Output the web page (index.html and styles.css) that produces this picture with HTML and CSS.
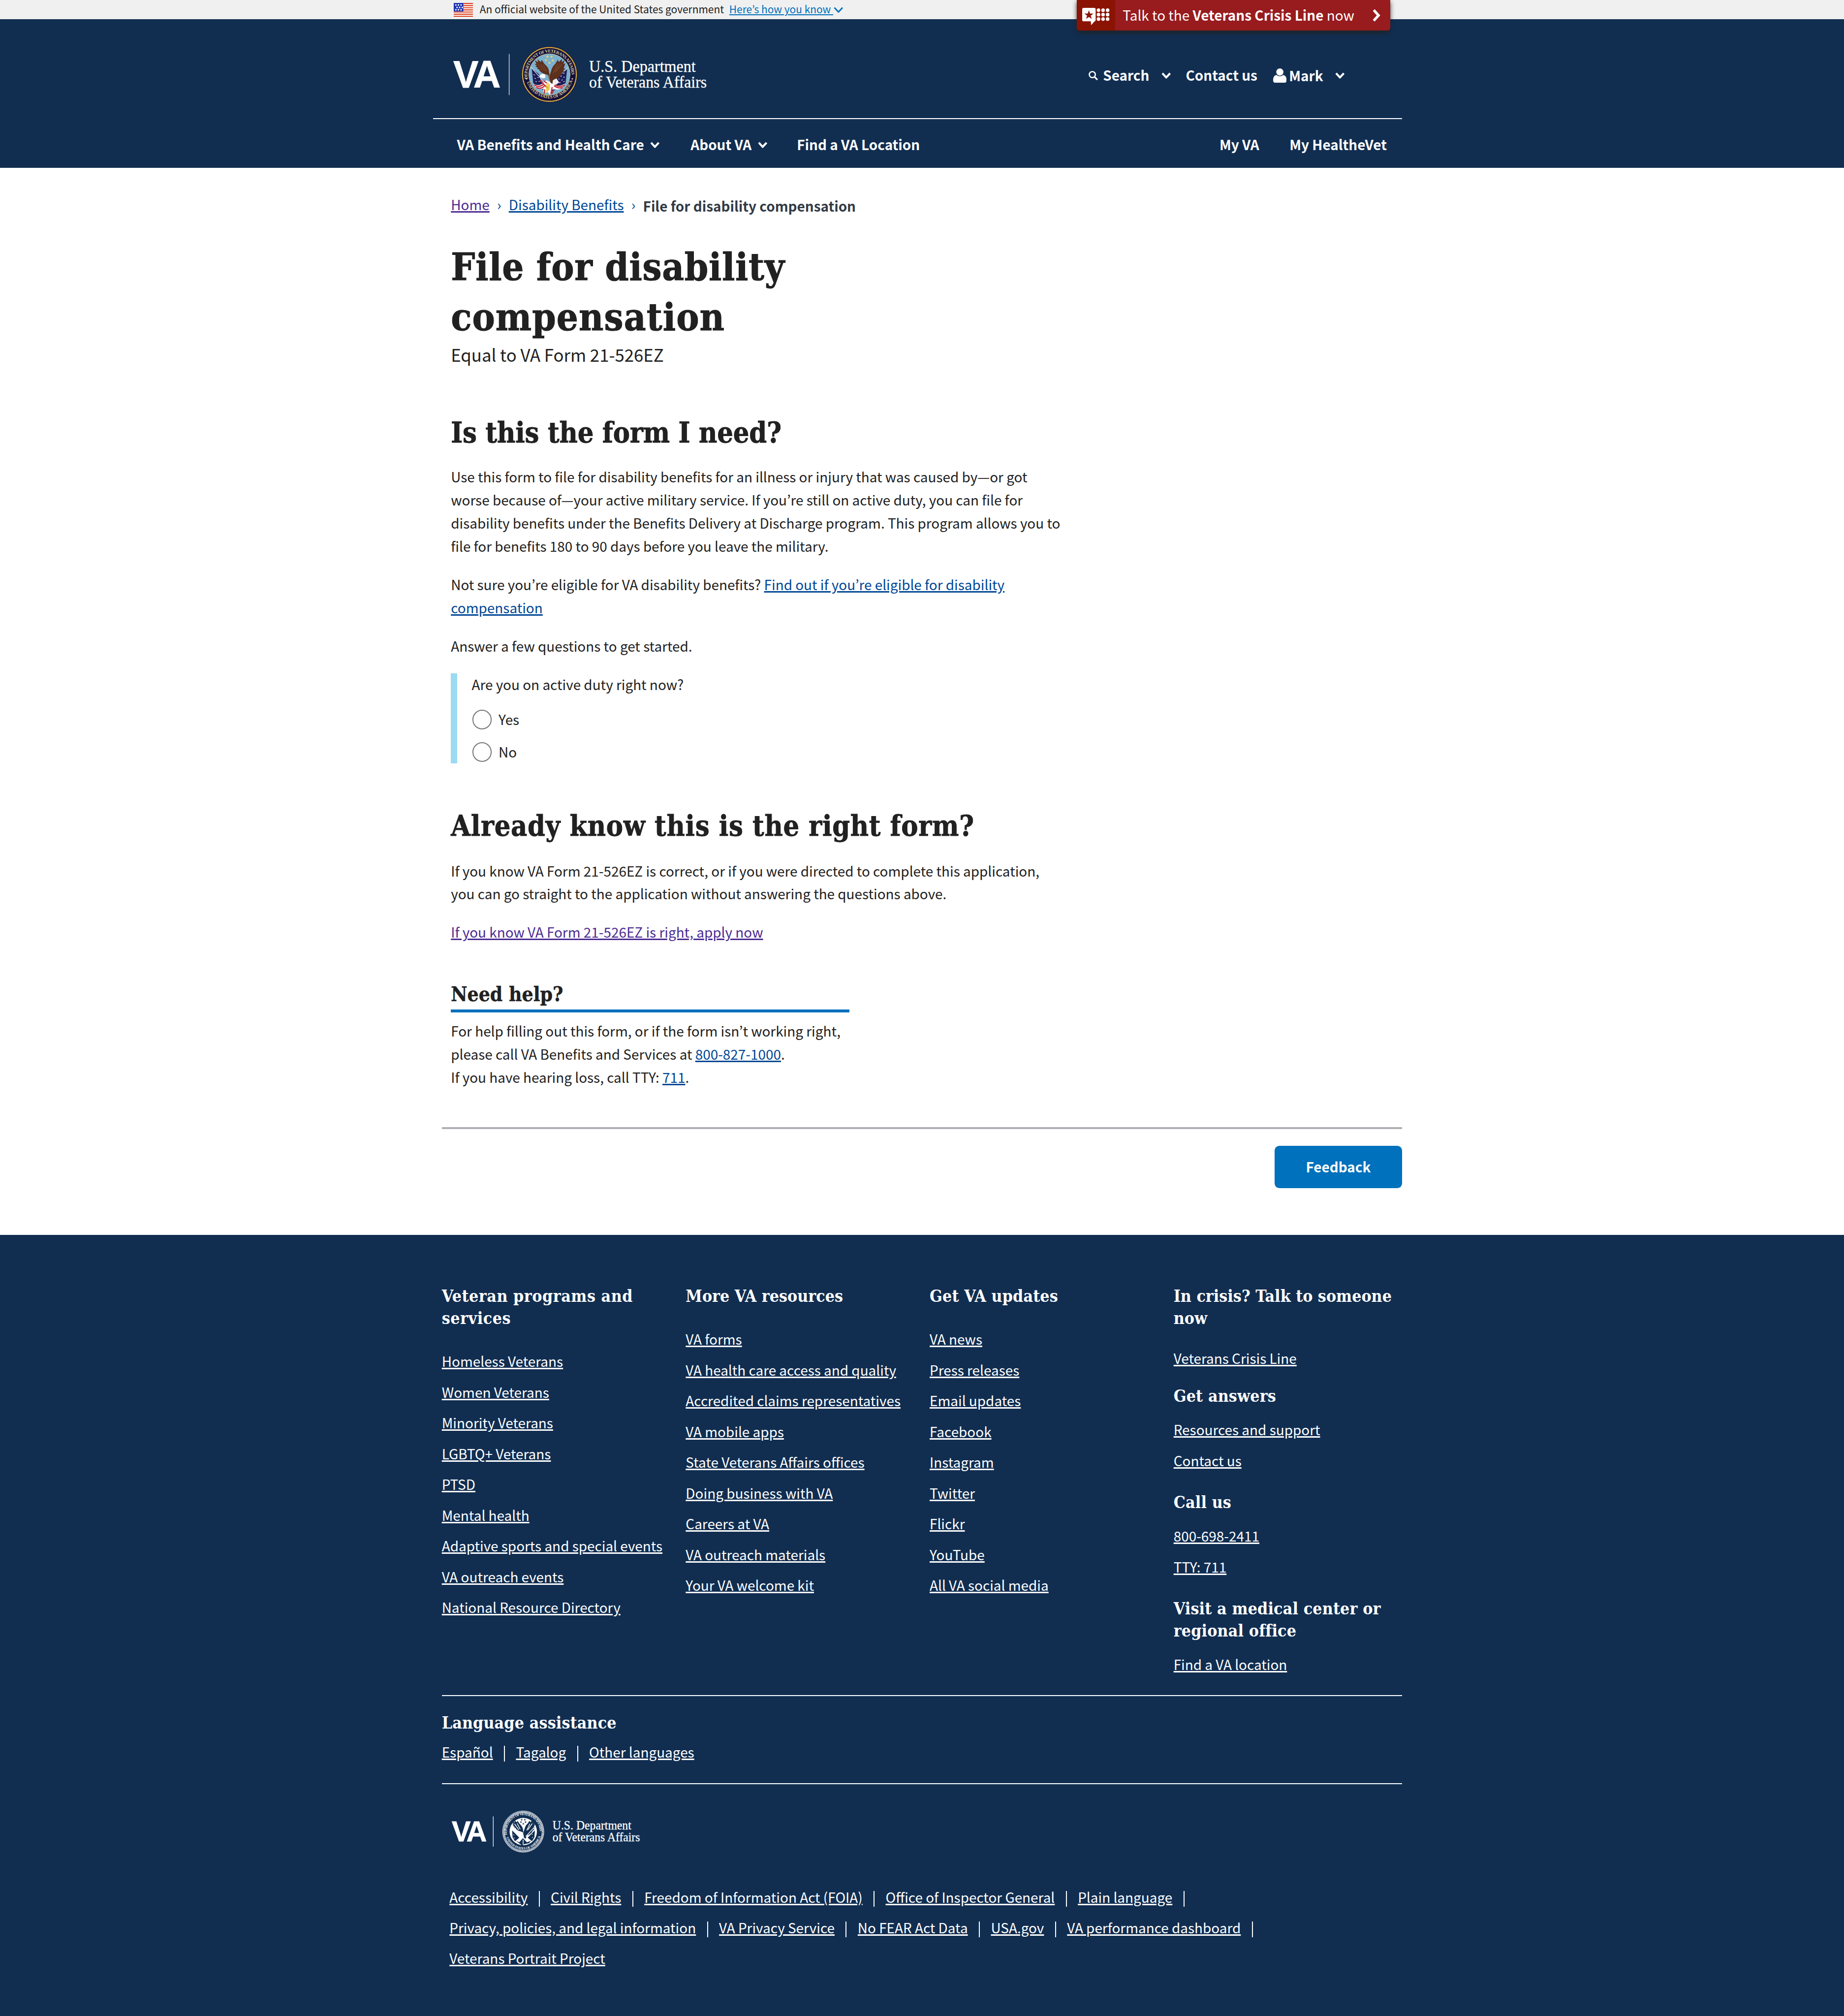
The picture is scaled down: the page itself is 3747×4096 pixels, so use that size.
FILE: index.html
```html
<!DOCTYPE html>
<html lang="en">
<head>
<meta charset="utf-8">
<title>File for disability compensation | Veterans Affairs</title>
<link rel="stylesheet" href="styles.css">
</head>
<body>

<svg class="defs" width="0" height="0" aria-hidden="true">
  <defs>
    <symbol id="chevron" viewBox="0 0 20 13"><path d="M2 2l8 8.600L18 2" fill="none" stroke="currentColor" stroke-width="4.200"/></symbol>
    <path id="star" d="M0-10l2.400 6.800h7.100l-5.700 4.300 2.100 7L0 4l-5.900 4.100 2.100-7-5.700-4.300h7.100z"/>
    <path id="arc-top" d="M537.700 253A138 138 0 1 1 808.300 253"/>
    <path id="arc-bottom" d="M526 252A149.500 149.500 0 0 0 820 252"/>
    <g id="wings">
      <path d="M578 158l14 4-10-26 20 14-4-20 22 18 4-14 18 26c16 14 26 28 28 44l4 30-22-10c-22-4-38-16-44-30l-14-6 8-4-18-8 10-4z"/>
      <path d="M772 156l-12 4 8-24-18 12 2-20-22 20-4-16-16 26c-16 14-22 28-26 44l-12 36 8 40 14 6 8-26c26-8 44-24 50-42l14-10-8-4 14-12-10-4z"/>
    </g>
  </defs>
</svg>

<div class="banner">
  <svg class="flag" viewBox="0 0 40 29">
    <rect width="40" height="29" fill="#fff"/>
    <path d="M0 1.100h40M0 5.560h40M0 10.020h40M0 14.480h40M0 18.940h40M0 23.400h40M0 27.860h40" stroke="#db3e1f" stroke-width="2.230"/>
    <rect width="20" height="17.800" fill="#1e33b1"/>
    <path d="M3 4.300h14.500M5.500 9.300h14M3 14.300h14.500" stroke="#fff" stroke-width="2.800" stroke-dasharray="2.800 2.600"/>
  </svg>
  <span class="banner-text">An official website of the United States government</span>
  <a class="banner-link">Here’s how you know&nbsp;</a>
  <svg class="banner-chevron" viewBox="0 0 20 13"><path d="M1.500 1.500L10 10.600l8.500-9.100" fill="none" stroke="currentColor" stroke-width="3"/></svg>
</div>

<header class="header">
  <a class="crisis">
    <span class="crisis-icon">
      <svg viewBox="0 0 58 36">
        <path d="M3 0h22a3 3 0 0 1 3 3v22a3 3 0 0 1-2 3l-7.500 8-.5-8H3a3 3 0 0 1-3-3V3a3 3 0 0 1 3-3z" fill="#fff"/>
        <use href="#star" x="14" y="15" fill="#8b1303"/>
        <g fill="#fff"><circle cx="34" cy="4.800" r="3.700"/><circle cx="43.500" cy="4.800" r="3.700"/><circle cx="53" cy="4.800" r="3.700"/><circle cx="34" cy="14" r="3.700"/><circle cx="43.500" cy="14" r="3.700"/><circle cx="53" cy="14" r="3.700"/><circle cx="34" cy="23.300" r="3.700"/><circle cx="43.500" cy="23.300" r="3.700"/><circle cx="53" cy="23.300" r="3.700"/></g>
      </svg>
    </span>
    <span class="crisis-text">Talk to the <b>Veterans Crisis Line</b> now</span>
    <svg class="crisis-arrow" viewBox="0 0 18 27"><path d="M3.500 2.500l10 11-10 11" fill="none" stroke="#fff" stroke-width="5.400"/></svg>
  </a>
  <div class="header-top">
    <svg class="logo" viewBox="944 40 540 206">
      <text x="944 985.800" y="182.500" class="logo-va" font-size="79">VA</text>
      <path d="M1060.500 112.500v85.500" stroke="#b4bcc8" stroke-width="1.800"/>
      <g transform="translate(920 80) scale(.33333)">
        <circle cx="673" cy="225" r="175" fill="#120f3d"/>
        <circle cx="673" cy="225" r="168" fill="none" stroke="#8f6a24" stroke-width="8"/>
        <circle cx="673" cy="225" r="168" fill="none" stroke="#f0c757" stroke-width="6" stroke-dasharray="6 3"/>
        <circle cx="673" cy="225" r="129" fill="#7db0cf" stroke="#d9c27a" stroke-width="3"/>
        <text class="seal-text" fill="#dccf97" font-size="27"><textPath href="#arc-top" textLength="462" lengthAdjust="spacing">DEPARTMENT OF VETERANS AFFAIRS</textPath></text>
        <text class="seal-text" fill="#dccf97" font-size="27"><textPath href="#arc-bottom" startOffset="22" textLength="380" lengthAdjust="spacing">UNITED STATES OF AMERICA</textPath></text>
        <circle cx="530" cy="253" r="4.500" fill="#dccf97"/><circle cx="816" cy="253" r="4.500" fill="#dccf97"/>
        <g fill="#ecd75c"><use href="#star" x="660" y="114"/><use href="#star" x="686" y="114"/><use href="#star" x="651" y="136"/><use href="#star" x="694" y="138"/><use href="#star" x="673" y="153"/></g>
        <path d="M562 186l44 36 14 44 34 60-50-14-32-32z" fill="#1d1c57"/>
        <path d="M784 186l-66 56-10 34-20 52 50-16 36-34z" fill="#1d1c57"/>
        <path d="M574 226l8 4M580 248l8 4M598 242l8 4M586 268l8 4M606 266l6 4M768 216l-8 4M750 234l-8 4M768 240l-8 4M736 252l-8 4M756 258l-8 4M768 268l-8 4M742 274l-8 4" stroke="#e6e6f2" stroke-width="4"/>
        <path d="M574 282c20 14 36 10 50 4l30-24 30 14 26 14c24 8 40 6 58-8-10 26-24 36-46 38l-30-2-16 34-12-16-14 4-8-8-8 6 2-24c-30 6-52-4-62-32z" fill="#fff"/>
        <path d="M578 290c20 14 40 12 58-2M590 306c16 8 36 6 52-8M614 262l46 48M622 256l36 24M768 292c-20 12-40 10-62-2M756 308c-20 4-38 0-54-12M690 304l-8 42M644 318l-4 26M700 320l-12 26" fill="none" stroke="#c3202f" stroke-width="7"/>
        <path d="M558 180l80 90M788 184l-74 68" stroke="#eef1f6" stroke-width="4"/>
        <use href="#wings" fill="#5b301d"/>
        <path d="M600 160l30 40M616 158l28 44M632 160l24 46M752 158l-36 50M738 156l-32 56M722 160l-26 60M666 232l10 34" fill="none" stroke="#80492b" stroke-width="4"/>
        <path d="M646 226c-14-8-28-2-32 8l-2 12 8-4c8 8 18 8 28 2z" fill="#fff"/>
        <path d="M694 262l22-12 18 24-20 16-22-6z" fill="#f1eef0"/>
        <path d="M654 286l4 54M664 276v52M672 286l-2 36" stroke="#e9bb2f" stroke-width="6"/>
      </g>
      <text x="1227" y="150" class="logo-name" font-size="35.500" textLength="222" lengthAdjust="spacingAndGlyphs">U.S. Department</text>
      <text x="1227" y="182" class="logo-name" font-size="35.500" textLength="245" lengthAdjust="spacingAndGlyphs">of Veterans Affairs</text>
    </svg>
    <div class="utility">
      <svg class="icon-search" viewBox="0 0 19 19"><circle cx="7.800" cy="7.800" r="6.300" fill="none" stroke="#fff" stroke-width="2.600"/><path d="M12.400 12.400l5 5.200" stroke="#fff" stroke-width="3.200" stroke-linecap="round"/></svg>
      <span class="u-search">Search</span>
      <svg class="chev u-chev-search"><use href="#chevron"/></svg>
      <span class="u-contact">Contact us</span>
      <svg class="icon-user" viewBox="0 0 28 30"><circle cx="14" cy="7.500" r="7.500" fill="#fff"/><path d="M7 13.500c4 3.600 10 3.600 14 0 5 1 7 5 7 11 0 3.500-1.500 5.500-5 5.500H5c-3.500 0-5-2-5-5.500 0-6 2-10 7-11z" fill="#fff"/></svg>
      <span class="u-user">Mark</span>
      <svg class="chev u-chev-user"><use href="#chevron"/></svg>
    </div>
  </div>
  <nav class="nav">
    <span>VA Benefits and Health Care</span><svg class="chev nav-chev"><use href="#chevron"/></svg>
    <span class="nav-about">About VA</span><svg class="chev nav-chev"><use href="#chevron"/></svg>
    <span class="nav-find">Find a VA Location</span>
    <span class="nav-my">My VA</span>
    <span class="nav-mhv">My HealtheVet</span>
  </nav>
</header>

<main class="main">
  <nav class="crumbs">
    <a class="visited">Home</a><span class="sep">›</span><a>Disability Benefits</a><span class="sep">›</span><b>File for disability compensation</b>
  </nav>
  <h1>File for disability<br><span class="h1-second">compensation</span></h1>
  <p class="subtitle">Equal to VA Form 21-526EZ</p>

  <h2 class="h2-need">Is this the form I need?</h2>
  <p>Use this form to file for disability benefits for an illness or injury that was caused by—or got<br>worse because of—your active military service. If you’re still on active duty, you can file for<br>disability benefits under the Benefits Delivery at Discharge program. This program allows you to<br>file for benefits 180 to 90 days before you leave the military.</p>
  <p>Not sure you’re eligible for VA disability benefits? <a>Find out if you’re eligible for disability<br>compensation</a></p>
  <p>Answer a few questions to get started.</p>
  <div class="question">
    <div class="legend">Are you on active duty right now?</div>
    <label class="option"><i class="radio"></i>Yes</label>
    <label class="option"><i class="radio"></i>No</label>
  </div>

  <h2 class="h2-know">Already know this is the right form?</h2>
  <p>If you know VA Form 21-526EZ is correct, or if you were directed to complete this application,<br>you can go straight to the application without answering the questions above.</p>
  <p><a class="visited">If you know VA Form 21-526EZ is right, apply now</a></p>

  <h3>Need help?</h3>
  <p class="help">For help filling out this form, or if the form isn’t working right,<br>please call VA Benefits and Services at <a>800-827-1000</a>.<br>If you have hearing loss, call TTY: <a>711</a>.</p>
</main>
<div class="feedback">
  <button class="feedback-btn">Feedback</button>
</div>

<footer class="footer">
  <div class="cols">
    <section>
      <h4 class="wide">Veteran programs and<br>services</h4>
      <ul class="first">
        <li><a>Homeless Veterans</a></li><li><a>Women Veterans</a></li><li><a>Minority Veterans</a></li><li><a>LGBTQ+ Veterans</a></li><li><a>PTSD</a></li><li><a>Mental health</a></li><li><a>Adaptive sports and special events</a></li><li><a>VA outreach events</a></li><li><a>National Resource Directory</a></li>
      </ul>
    </section>
    <section>
      <h4 class="tight">More VA resources</h4>
      <ul class="first">
        <li><a>VA forms</a></li><li><a>VA health care access and quality</a></li><li><a>Accredited claims representatives</a></li><li><a>VA mobile apps</a></li><li><a>State Veterans Affairs offices</a></li><li><a>Doing business with VA</a></li><li><a>Careers at VA</a></li><li><a>VA outreach materials</a></li><li><a>Your VA welcome kit</a></li>
      </ul>
    </section>
    <section>
      <h4>Get VA updates</h4>
      <ul class="first">
        <li><a>VA news</a></li><li><a>Press releases</a></li><li><a>Email updates</a></li><li><a>Facebook</a></li><li><a>Instagram</a></li><li><a>Twitter</a></li><li><a>Flickr</a></li><li><a>YouTube</a></li><li><a>All VA social media</a></li>
      </ul>
    </section>
    <section class="contact">
      <h4 class="tight">In crisis? Talk to someone<br>now</h4>
      <ul class="crisis-list"><li><a>Veterans Crisis Line</a></li></ul>
      <h4 class="answers">Get answers</h4>
      <ul><li><a>Resources and support</a></li><li><a>Contact us</a></li></ul>
      <h4 class="more">Call us</h4>
      <ul><li><a>800-698-2411</a></li><li><a>TTY: 711</a></li></ul>
      <h4 class="more">Visit a medical center or<br>regional office</h4>
      <ul><li><a>Find a VA location</a></li></ul>
    </section>
  </div>

  <div class="language">
    <h4>Language assistance</h4>
    <div class="links lang-links"><a>Español</a><i></i><a>Tagalog</a><i></i><a>Other languages</a></div>
  </div>

  <svg class="footer-logo" viewBox="936 3715 420 202">
    <text x="941 971.500" y="3833.700" class="logo-va" font-size="59">VA</text>
    <path d="M1027.500 3782v63" stroke="#fff" stroke-width="1.300"/>
    <g transform="translate(1090 3813.500) scale(.25) translate(-673 -225)">
      <circle cx="673" cy="225" r="172" fill="none" stroke="#fff" stroke-width="4"/>
      <circle cx="673" cy="225" r="163" fill="none" stroke="#fff" stroke-width="11" stroke-dasharray="7 4"/>
      <circle cx="673" cy="225" r="156" fill="none" stroke="#fff" stroke-width="3"/>
      <circle cx="673" cy="225" r="114" fill="#fff"/>
      <text class="seal-text" fill="#fff" font-size="28"><textPath href="#arc-top" textLength="458" lengthAdjust="spacing">DEPARTMENT OF VETERANS AFFAIRS</textPath></text>
      <text class="seal-text" fill="#fff" font-size="28"><textPath href="#arc-bottom" startOffset="22" textLength="380" lengthAdjust="spacing">UNITED STATES OF AMERICA</textPath></text>
      <g fill="#112e51">
        <use href="#star" x="660" y="126"/><use href="#star" x="686" y="126"/><use href="#star" x="654" y="146"/><use href="#star" x="692" y="146"/><use href="#star" x="673" y="160"/>
        <use href="#wings"/>
        <path d="M580 214l60 62-36 30-20-34zM770 214l-60 62 36 30 20-34z"/>
        <path d="M610 300l30 14 30-34 36 34 32-14-18 22-40 8-12 14-16-12z"/>
      </g>
      <path d="M580 186l70 76M766 188l-72 78M600 160l36 50M622 156l26 50M748 158l-36 52M728 160l-26 56M620 300l30-24M636 308l22-22M724 302l-28-24M706 312l-20-20M672 292v44" stroke="#fff" stroke-width="6"/>
      <path d="M590 250l8 4M594 276l8 4M752 246l-8 4M754 272l-8 4" stroke="#fff" stroke-width="5"/>
    </g>
    <text x="1151" y="3809.500" class="logo-name" font-size="26" textLength="164" lengthAdjust="spacingAndGlyphs">U.S. Department</text>
    <text x="1151" y="3833.700" class="logo-name" font-size="26" textLength="182" lengthAdjust="spacingAndGlyphs">of Veterans Affairs</text>
  </svg>

  <div class="legal">
    <div class="links"><a>Accessibility</a><i></i><a>Civil Rights</a><i></i><a>Freedom of Information Act (FOIA)</a><i></i><a>Office of Inspector General</a><i></i><a>Plain language</a><i></i></div>
    <div class="links"><a>Privacy, policies, and legal information</a><i></i><a>VA Privacy Service</a><i></i><a>No FEAR Act Data</a><i></i><a>USA.gov</a><i></i><a>VA performance dashboard</a><i></i></div>
    <div class="links"><a>Veterans Portrait Project</a></div>
  </div>
</footer>
</body>
</html>
```
FILE: styles.css
```css
/* 1rem is ten design pixels */
html { font-size: 9.7575px; }
* { box-sizing: border-box; margin: 0; padding: 0; }
body {
  width: 384rem;
  min-height: 100vh;
  display: flex;
  flex-direction: column;
  overflow-x: hidden;
  background: #fff;
  color: #212121;
  font-family: "Noto Sans CJK KR", "Noto Sans", sans-serif;
  font-size: 2.861rem;
  line-height: 4.8rem;
  white-space: nowrap;
}
svg { display: block; flex: none; }
.defs { position: absolute; }
ul { list-style: none; }
a {
  color: #004795;
  text-decoration: underline;
  text-decoration-thickness: 3px;
  text-underline-offset: 0.2rem;
}
a.visited { color: #4c2c92; }
h1, h2, h3, h4 {
  font-family: "DejaVu Serif Condensed", "DejaVu Serif", serif;
  font-stretch: condensed;
  font-weight: 700;
}

/* government banner */
.banner {
  height: 4rem;
  padding-left: 94.5rem;
  display: flex;
  align-items: flex-start;
  background: #f0f0f0;
  font-size: 2.146rem;
  line-height: 3.8rem;
}
.flag { width: 4rem; height: 2.9rem; margin-top: 0.6rem; }
.banner-text { margin-left: 1.4rem; }
.banner-link { margin-left: 1.1rem; color: #0071bc; text-decoration-thickness: 2px; }
.banner-chevron { width: 2rem; height: 1.3rem; margin: 1.4rem 0 0 0.1rem; color: #0071bc; }

/* header */
.header { height: 31rem; padding-left: 90.2rem; background: #112e51; color: #fff; font-weight: 700; position: relative; }
.crisis {
  position: absolute;
  top: -4rem;
  left: 224.2rem;
  width: 65.3rem;
  height: 6.4rem;
  display: flex;
  background: #981b1e;
  border-radius: 0 0 0.6rem 0.6rem;
  box-shadow: 0 0.5rem 1rem 0 rgba(33, 33, 33, 0.85);
  color: #fff;
  font-weight: 400;
  text-decoration: none;
}
.crisis-icon { width: 8rem; padding: 1.6rem 0 0 1.2rem; background: #8b1303; border-radius: 0 0 0 0.6rem; }
.crisis-icon svg { width: 5.8rem; height: 3.6rem; }
.crisis-text { padding-left: 1.6rem; line-height: 6.3rem; }
.crisis-arrow { width: 1.8rem; height: 2.7rem; margin: 1.8rem 2rem 0 auto; }
.header-top { width: 201.8rem; height: 20.8rem; padding-left: 4.2rem; display: flex; border-bottom: 2px solid #fff; }
.logo { width: 54rem; height: 20.6rem; }
.logo-va { font-family: "Liberation Sans", Arial, sans-serif; font-weight: 700; fill: #fff; stroke: #fff; stroke-width: 0.8; }
.logo-name { font-family: "Liberation Serif", serif; font-weight: 400; fill: #fff; stroke: #fff; stroke-width: 0.3; }
.seal-text { font-family: "Liberation Serif", serif; font-weight: 700; }
.utility { margin-left: 78.3rem; padding-top: 9.3rem; display: flex; line-height: 4.6rem; }
.icon-search { width: 1.9rem; height: 1.9rem; margin-top: 1.5rem; }
.u-search { margin-left: 1.1rem; }
.chev { width: 2rem; height: 1.3rem; margin-top: 1.8rem; }
.u-chev-search { margin-left: 2.5rem; }
.u-contact { margin-left: 3.1rem; }
.icon-user { width: 2.8rem; height: 3rem; margin: 0.95rem 0 0 3.3rem; }
.u-user { margin: 0.1rem 0 0 0.5rem; }
.u-chev-user { margin-left: 2.5rem; }
.nav { width: 201.8rem; height: 10.2rem; padding: 1rem 3.2rem 0 4.95rem; display: flex; line-height: 8.6rem; }
.nav-chev { margin: 3.75rem 0 0 1.3rem; }
.nav-about { margin-left: 6.4rem; }
.nav-find { margin-left: 6.15rem; }
.nav-my { margin-left: auto; }
.nav-mhv { margin-left: 6.3rem; }

/* main content */
.main { padding: 5.16rem 0 0 93.9rem; }
.crumbs { display: flex; }
.crumbs .sep { color: #004795; width: 4rem; text-align: center; }
.crumbs b { padding-top: 0.3rem; color: #323a45; line-height: 4.8rem; height: 4.8rem; }
h1 { margin-top: 5.5rem; font-size: 7.9rem; line-height: 10.4rem; letter-spacing: 0.07rem; -webkit-text-stroke: 1px #212121; }
.h1-second { letter-spacing: 0.11rem; }
.subtitle { font-size: 3.56rem; line-height: 5.2rem; }
h2 { font-size: 5.85rem; line-height: 7.8rem; -webkit-text-stroke: 0.8px #212121; }
h2 + p { margin-top: 2.9rem; }
.h2-need { margin-top: 9.74rem; letter-spacing: -0.018rem; }
.h2-know { margin-top: 9.1rem; letter-spacing: 0.068rem; }
.h2-know + p { margin-top: 3rem; }
p + p { margin-top: 3.2rem; }
.question { margin-top: 3.3rem; height: 18.8rem; padding-left: 3rem; border-left: 1.4rem solid #9bdaf1; }
.legend { line-height: 4.6rem; }
.option { display: flex; height: 4rem; margin: 2.8rem 0 0 0.15rem; line-height: 3.9rem; }
.legend + .option { margin-top: 3rem; }
.radio { width: 4.05rem; height: 4.05rem; margin-right: 1.4rem; border: 2px solid #757575; border-radius: 50%; }
h3 { width: 83rem; margin-top: 7.85rem; padding-bottom: 0.4rem; border-bottom: 6px solid #0071bc; font-size: 4.15rem; line-height: 5.4rem; -webkit-text-stroke: 0.5px #212121; }
.help { margin-top: 1.5rem; }
.feedback { width: 200rem; height: 22.5rem; margin: 8rem 0 0 92rem; padding-top: 3.5rem; border-top: 4px solid #aeb0b5; }
.feedback-btn { display: block; width: 26.6rem; height: 8.8rem; margin-left: auto; border: 0; border-radius: 1rem; background: #0071bc; color: #fff; font: 700 2.861rem/8.6rem "Noto Sans CJK KR", "Noto Sans", sans-serif; }

/* footer */
.footer { flex: 1; padding: 10.45rem 0 0 92rem; background: #112e51; color: #fff; }
.footer a { color: #fff; text-decoration-thickness: 3px; }
.cols { width: 200rem; height: 85.6rem; display: grid; grid-template-columns: repeat(4, 50.8rem); border-bottom: 2px solid #fff; }
h4 { font-size: 3.45rem; line-height: 4.6rem; letter-spacing: 0.015rem; }
h4.wide { letter-spacing: 0.055rem; }
h4.tight { letter-spacing: 0; }
.footer li { line-height: 6.4rem; }
h4 + ul { margin-top: 1.5rem; }
h4 + .first { margin-top: 3.42rem; }
h4 + .crisis-list { margin-top: 2.74rem; }
.answers { margin-top: 2.4rem; }
.more { margin-top: 3.25rem; }
.language { width: 200rem; height: 18.3rem; padding-top: 3.2rem; border-bottom: 2px solid #fff; }
.lang-links { margin-top: 1.35rem; }
.links { display: flex; align-items: center; }
.links i { width: 2px; height: 3.3rem; margin: 0.8rem 2.3rem 0; background: #fff; }
.footer-logo { width: 42rem; height: 20.25rem; margin-left: 1.6rem; }
.legal { padding-left: 1.6rem; line-height: 6.4rem; }
```
